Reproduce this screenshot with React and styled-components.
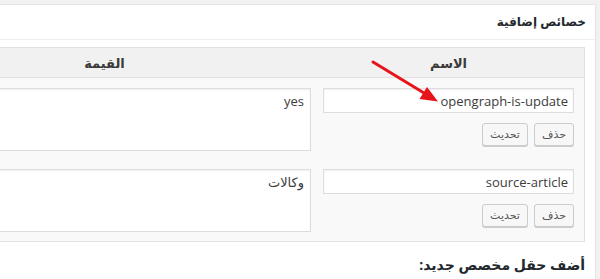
import React from "react";
import styled, { createGlobalStyle } from "styled-components";

const GlobalStyle = createGlobalStyle`
  html, body {
    margin: 0;
    padding: 0;
    direction: rtl;
    background: #f1f1f1;
    font-family: "Open Sans", "DejaVu Sans", sans-serif;
    color: #32373c;
  }
  * { box-sizing: border-box; }
`;

const Page = styled.div`
  position: relative;
  height: 279px;
  overflow: hidden;
  padding: 4px 4px 0 0;
`;

const Postbox = styled.div`
  width: 712px;
  background: #fff;
  border: 1px solid #e5e5e5;
  box-shadow: 0 1px 1px rgba(0, 0, 0, 0.04);
`;

const Handle = styled.h2`
  margin: 0;
  height: 35px;
  line-height: 34px;
  padding: 0 9px;
  font-size: 12px;
  font-weight: 700;
  color: #23282d;
  border-bottom: 1px solid #eee;
`;

const Inside = styled.div`
  padding: 7px 10px 12px;
`;

const Table = styled.div`
  border: 1px solid #e1e1e1;
  background: #f9f9f9;
`;

const Row = styled.div`
  display: grid;
  grid-template-columns: 271px 1fr;
`;

const HeadRow = styled(Row)`
  background: #f1f1f1;
  height: 30px;
  border-bottom: 1px solid #e1e1e1;
`;

const Th = styled.div`
  display: flex;
  align-items: center;
  justify-content: center;
  font-size: 13px;
  font-weight: 700;
  color: #3a3a3a;
`;

const Cell = styled.div`
  padding: 10px ${(p) => (p.$value ? "2px" : "10px")}
    ${(p) => (p.$last ? "9px" : "8px")} 10px;
  display: flex;
  flex-direction: column;
  gap: 10px;
`;

const fieldBase = `
  width: 100%;
  background: #fff;
  border: 1px solid #ddd;
  box-shadow: inset 0 1px 2px rgba(0, 0, 0, 0.07);
  font-family: "Open Sans", "DejaVu Sans", sans-serif;
  font-size: 13px;
  color: #3c3c3c;
  direction: rtl;
  margin: 0;
  outline: none;
`;

const NameInput = styled.input`
  ${fieldBase}
  height: 25px;
  padding: 0 5px;
`;

const ValueArea = styled.textarea`
  ${fieldBase}
  height: 63px;
  padding: 3px 6px;
  resize: none;
  line-height: 18px;
  display: block;
`;

const Buttons = styled.div`
  display: flex;
  gap: 6px;
`;

const Button = styled.button`
  height: 23px;
  width: ${(p) => p.$w}px;
  padding: 0;
  background: #f7f7f7;
  border: 1px solid #ccc;
  border-radius: 3px;
  box-shadow: 0 1px 0 #ccc;
  font-family: "DejaVu Sans", sans-serif;
  font-size: 11px;
  color: #555;
  line-height: 21px;
`;

const NewField = styled.p`
  margin: 13px 0 0;
  font-size: 14px;
  font-weight: 700;
  color: #23282d;
`;

const Arrow = styled.svg`
  position: absolute;
  left: 368px;
  top: 56px;
  width: 76px;
  height: 52px;
  pointer-events: none;
`;

const rows = [
  { name: "opengraph-is-update", value: "yes" },
  { name: "source-article", value: "وكالات" },
];

export default function App() {
  return (
    <>
      <GlobalStyle />
      <Page>
        <Postbox>
          <Handle>خصائص إضافية</Handle>
          <Inside>
            <Table>
              <HeadRow>
                <Th>الاسم</Th>
                <Th>القيمة</Th>
              </HeadRow>
              {rows.map((r, i) => (
                <Row key={r.name}>
                  <Cell $last={i === rows.length - 1}>
                    <NameInput defaultValue={r.name} />
                    <Buttons>
                      <Button $w={40}>حذف</Button>
                      <Button $w={46}>تحديث</Button>
                    </Buttons>
                  </Cell>
                  <Cell $value $last={i === rows.length - 1}>
                    <ValueArea defaultValue={r.value} />
                  </Cell>
                </Row>
              ))}
            </Table>
            <NewField>أضف حقل مخصص جديد:</NewField>
          </Inside>
        </Postbox>
        <Arrow viewBox="368 56 76 52">
          <line x1="373" y1="62" x2="424" y2="93" stroke="#e8141b" strokeWidth="3" strokeLinecap="round" />
          <polygon points="438,101.5 427,87 419.5,99" fill="#e8141b" />
        </Arrow>
      </Page>
    </>
  );
}
